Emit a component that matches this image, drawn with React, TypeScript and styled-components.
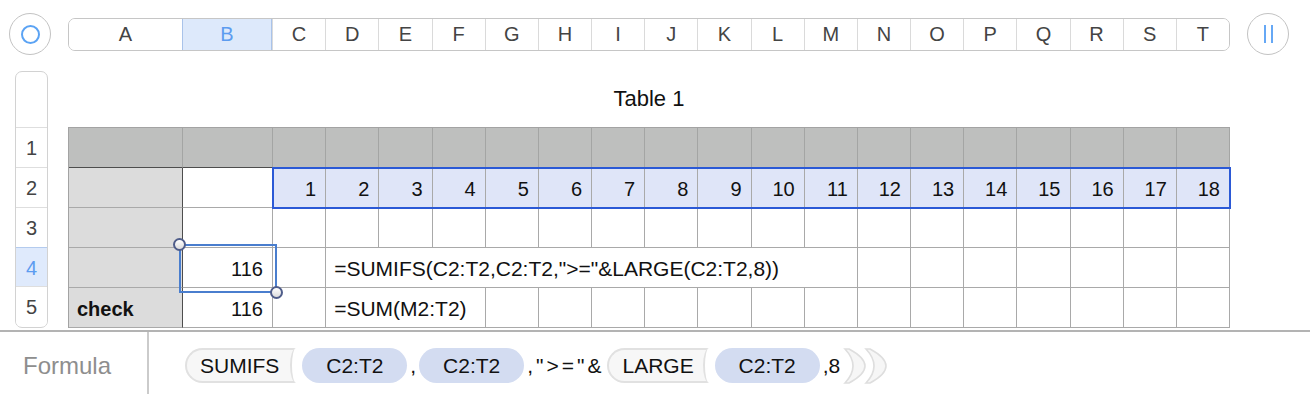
import * as React from 'react';
import styled, { createGlobalStyle } from 'styled-components';

const columns = 'ABCDEFGHIJKLMNOPQRST'.split('');
const values = Array.from({ length: 18 }, (_, i) => i + 1);

const GlobalStyle = createGlobalStyle`
  html, body {
    margin: 0;
    padding: 0;
    background: #fff;
  }
  body {
    font-family: "Liberation Sans", Arial, Helvetica, sans-serif;
    color: #111;
  }
`;

const Page = styled.div`
  width: 1310px;
  height: 394px;
  overflow: hidden;
  display: flex;
  flex-direction: column;
`;

const TopBar = styled.div`
  display: flex;
  align-items: center;
  gap: 17px;
  height: 44px;
  padding: 12px 0 0 9px;
`;

const RoundButton = styled.div`
  width: 42px;
  height: 42px;
  box-sizing: border-box;
  border: 1px solid #c3c3c3;
  border-radius: 50%;
  background: #fff;
  display: flex;
  align-items: center;
  justify-content: center;
  flex-shrink: 0;
`;

const Ring = styled.div`
  width: 19px;
  height: 19px;
  box-sizing: border-box;
  border: 2px solid #5ba3f4;
  border-radius: 50%;
`;

const Bars = styled.div`
  display: flex;
  gap: 5px;
  & > span {
    width: 2px;
    height: 18px;
    background: #66a8f5;
  }
`;

const ColumnBar = styled.div`
  width: 1162px;
  height: 33px;
  box-sizing: border-box;
  border: 1px solid #c6c6c6;
  border-radius: 7px;
  overflow: hidden;
  display: grid;
  grid-template-columns: 113px 90px repeat(18, 1fr);
`;

const ColumnHead = styled.div<{ $active?: boolean; $first?: boolean }>`
  display: flex;
  align-items: center;
  justify-content: center;
  padding-top: 1px;
  font-size: 20px;
  color: ${(p) => (p.$active ? '#5c9cf0' : '#444')};
  background: ${(p) => (p.$active ? '#dde9fb' : '#fff')};
  border-left: ${(p) => (p.$first ? 'none' : p.$active ? '1px solid #a9c3ea' : '1px solid #dadada')};
  border-right: ${(p) => (p.$active ? '1px solid #a9c3ea' : 'none')};
`;

const Main = styled.div`
  display: flex;
  gap: 20px;
  padding-left: 15px;
  margin-top: 15px;
`;

const RowHeader = styled.div`
  width: 33px;
  box-sizing: border-box;
  border: 1px solid #d2d2d2;
  border-radius: 7px;
  overflow: hidden;
  display: flex;
  flex-direction: column;
`;

const RowHeadTop = styled.div`
  height: 55px;
`;

const RowHead = styled.div<{ $active?: boolean }>`
  height: 40px;
  box-sizing: border-box;
  padding-top: 2px;
  border-top: 1px solid ${(p) => (p.$active ? '#b4cbee' : '#dedede')};
  border-bottom: ${(p) => (p.$active ? '1px solid #b4cbee' : 'none')};
  margin-bottom: ${(p) => (p.$active ? '-1px' : '0')};
  background: ${(p) => (p.$active ? '#dfeafc' : '#fff')};
  color: ${(p) => (p.$active ? '#5c9cf0' : '#444')};
  font-size: 20px;
  display: flex;
  align-items: center;
  justify-content: center;
`;

const TableArea = styled.div`
  width: 1162px;
  display: flex;
  flex-direction: column;
`;

const Title = styled.div`
  height: 56px;
  display: flex;
  align-items: center;
  justify-content: center;
  font-size: 22px;
  color: #111;
`;

const Grid = styled.div`
  position: relative;
  display: grid;
  grid-template-columns: 114px 90px repeat(18, 1fr);
  grid-auto-rows: 40px;
  border-left: 1px solid #a3a3a3;
  border-top: 1px solid #a3a3a3;
`;

type Tone = 'head' | 'label' | 'sel' | 'plain';

const toneBg: Record<Tone, string> = {
  head: '#bebfbe',
  label: '#dcdcdc',
  sel: '#dfe5f8',
  plain: '#fff',
};

const Cell = styled.div<{ $tone?: Tone; $span?: number; $right?: boolean; $bold?: boolean; $wide?: boolean }>`
  grid-column: span ${(p) => p.$span || 1};
  box-sizing: border-box;
  background: ${(p) => toneBg[p.$tone || 'plain']};
  border-right: 1px solid ${(p) => (p.$tone === 'label' ? '#4d4d4d' : p.$tone === 'head' ? '#a4a5a4' : '#a9a9a9')};
  border-bottom: 1px solid ${(p) => (p.$tone === 'head' ? '#4d4d4d' : '#a9a9a9')};
  display: flex;
  align-items: center;
  justify-content: ${(p) => (p.$right ? 'flex-end' : 'flex-start')};
  padding: ${(p) => (p.$right ? '3px 9px 0 0' : '3px 0 0 8px')};
  font-size: ${(p) => (p.$wide ? '21px' : '20px')};
  font-weight: ${(p) => (p.$bold ? 700 : 400)};
  white-space: nowrap;
  color: #111;
`;

const RangeBox = styled.div`
  position: absolute;
  left: 203px;
  top: 39px;
  width: 959px;
  height: 42px;
  box-sizing: border-box;
  border: 2px solid #2b59d6;
  pointer-events: none;
`;

const CellBox = styled.div`
  position: absolute;
  left: 110px;
  top: 116px;
  width: 98px;
  height: 49px;
  box-sizing: border-box;
  border: 2px solid #4a7ece;
  pointer-events: none;
`;

const Handle = styled.div<{ $end?: boolean }>`
  position: absolute;
  width: 13px;
  height: 13px;
  box-sizing: border-box;
  border-radius: 50%;
  border: 2px solid #4f5d8a;
  background: linear-gradient(#ffffff, #dcdcdc);
  ${(p) => (p.$end ? 'right: -8px; bottom: -8px;' : 'left: -8px; top: -8px;')}
`;

const FormulaBar = styled.div`
  display: flex;
  height: 62px;
  margin-top: 2px;
  border-top: 2px solid #b3b3b3;
`;

const FormulaLabel = styled.div`
  width: 149px;
  box-sizing: border-box;
  border-right: 2px solid #cbcbcb;
  padding: 5px 0 0 23px;
  display: flex;
  align-items: center;
  font-size: 24px;
  color: #8e8e8e;
`;

const Tokens = styled.div`
  display: flex;
  align-items: center;
  padding: 5px 0 0 36px;
  font-size: 21px;
  color: #111;
`;

const FnPill = styled.span<{ $pad: number }>`
  position: relative;
  display: inline-flex;
  align-items: center;
  height: 35px;
  box-sizing: border-box;
  padding: 0 ${(p) => p.$pad}px 0 13px;
  margin-right: 6px;
  background: #f7f7f7;
  border: 2px solid #e1e1e1;
  border-right: none;
  border-radius: 18px 0 0 18px;
  &::after {
    content: '';
    position: absolute;
    right: -6px;
    top: -2px;
    width: 12px;
    height: 35px;
    box-sizing: border-box;
    border-left: 2px solid #e1e1e1;
    border-radius: 50%;
    background: #fff;
  }
`;

const RefPill = styled.span`
  display: inline-flex;
  align-items: center;
  justify-content: center;
  height: 35px;
  width: 105px;
  border-radius: 18px;
  background: #d3dcf1;
`;

const Plain = styled.span<{ $spaced?: boolean }>`
  margin: 0 3px;
  letter-spacing: ${(p) => (p.$spaced ? '3px' : '0')};
`;

const Paren = styled.svg`
  flex-shrink: 0;
  & + & {
    margin-left: -5px;
  }
`;

const Crescent = () => (
  <Paren width="26" height="36" viewBox="0 0 26 36">
    <path d="M2 1 Q18 18 2 35 L6 35 Q38 18 6 1 Z" fill="#f6f6f6" stroke="#dedede" strokeWidth="1.6" />
  </Paren>
);

export default function App() {
  return (
    <Page>
      <GlobalStyle />
      <TopBar>
        <RoundButton>
          <Ring />
        </RoundButton>
        <ColumnBar>
          {columns.map((c, i) => (
            <ColumnHead key={c} $first={i === 0} $active={c === 'B'}>
              {c}
            </ColumnHead>
          ))}
        </ColumnBar>
        <RoundButton>
          <Bars>
            <span />
            <span />
          </Bars>
        </RoundButton>
      </TopBar>

      <Main>
        <RowHeader>
          <RowHeadTop />
          {[1, 2, 3, 4, 5].map((r) => (
            <RowHead key={r} $active={r === 4}>
              {r}
            </RowHead>
          ))}
        </RowHeader>

        <TableArea>
          <Title>Table 1</Title>
          <Grid>
            {columns.map((c) => (
              <Cell key={'h' + c} $tone="head" />
            ))}

            <Cell $tone="label" />
            <Cell />
            {values.map((v) => (
              <Cell key={'v' + v} $tone="sel" $right>
                {v}
              </Cell>
            ))}

            <Cell $tone="label" />
            {columns.slice(1).map((c) => (
              <Cell key={'r3' + c} />
            ))}

            <Cell $tone="label" />
            <Cell $right>116</Cell>
            <Cell />
            <Cell $span={10} $wide>
              =SUMIFS(C2:T2,C2:T2,"&gt;="&amp;LARGE(C2:T2,8))
            </Cell>
            {columns.slice(13).map((c) => (
              <Cell key={'r4' + c} />
            ))}

            <Cell $tone="label" $bold>
              check
            </Cell>
            <Cell $right>116</Cell>
            <Cell />
            <Cell $span={3} $wide>
              =SUM(M2:T2)
            </Cell>
            {columns.slice(6).map((c) => (
              <Cell key={'r5' + c} />
            ))}

            <RangeBox />
            <CellBox>
              <Handle />
              <Handle $end />
            </CellBox>
          </Grid>
        </TableArea>
      </Main>

      <FormulaBar>
        <FormulaLabel>Formula</FormulaLabel>
        <Tokens>
          <FnPill $pad={17}>SUMIFS</FnPill>
          <RefPill>C2:T2</RefPill>
          <Plain>,</Plain>
          <RefPill>C2:T2</RefPill>
          <Plain $spaced>,"&gt;="&amp;</Plain>
          <FnPill $pad={15}>LARGE</FnPill>
          <RefPill>C2:T2</RefPill>
          <Plain>,8</Plain>
          <Crescent />
          <Crescent />
        </Tokens>
      </FormulaBar>
    </Page>
  );
}
